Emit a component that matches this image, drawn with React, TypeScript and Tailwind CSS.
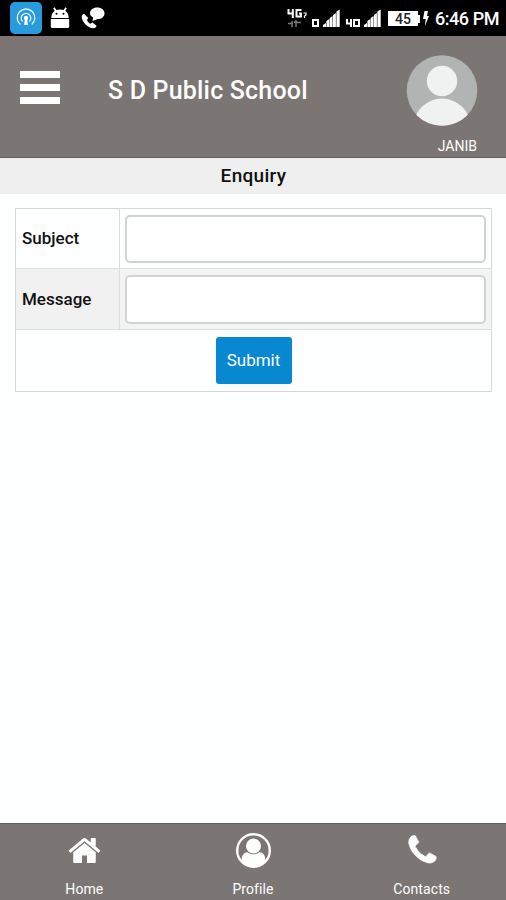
import React from 'react';

type NavItemProps = {
  label: string;
  children: React.ReactNode;
};

function SignalBars() {
  return (
    <svg className="h-[18px] w-[17px]" viewBox="0 0 17 18" fill="white">
      <path d="M0 18v-2l3-2v4zM3.400 18v-6l2.900-2v8zM6.700 18V9l2.900-2v11zM10 18V6l2.900-2v14zM13.400 18V2.500L16.700.5V18z" />
    </svg>
  );
}

function StatusBar() {
  return (
    <div className="flex h-9 w-full items-start bg-black text-white">
      <svg className="ml-[10px] mt-[2px] h-8 w-8" viewBox="0 0 32 32" fill="none">
        <rect width="32" height="32" rx="5" fill="#279bdc" />
        <circle cx="16" cy="16" r="2.200" fill="white" />
        <path d="M12.600 19.500a4.800 4.800 0 1 1 6.800 0M10.300 22.500a8.800 8.800 0 1 1 11.400 0" stroke="#e5f4fd" strokeWidth="1.300" />
        <path d="M14.800 18h2.400l.8 5h-4z" fill="white" />
      </svg>
      <svg className="ml-[8px] mt-[7px] h-[21px] w-5" viewBox="0 0 20 21" fill="white">
        <path d="M1.300 10.900C1.300 7.500 2.600 5.300 4.600 4L3.200 1.200l1.600-.9L6.300 3q3.700-1.200 7.400 0L15.200.3l1.600.9L15.400 4c2 1.300 3.300 3.500 3.300 6.900z" />
        <path d="M.8 11.900h18.400v7.600q0 1.500-1.500 1.500H2.300Q.8 21 .8 19.500z" />
        <circle cx="6.500" cy="6.800" r="1" fill="black" />
        <circle cx="13.500" cy="6.800" r="1" fill="black" />
      </svg>
      <svg className="ml-[11px] mt-[7px] h-[22px] w-6" viewBox="0 0 24 22" fill="white">
        <path d="M3 6.800C.9 7.600.3 9.500 1 11.800 2.500 16.500 7.500 21 11.800 21.300c2 .1 3.600-.8 3.700-2.500l-4-3.300-2.200 1.300C7.900 15.900 6.700 14.500 5.900 12.900l1.400-2z" />
        <path d="M16.200.5c4.100 0 7.300 2.300 7.300 5.800s-3 5.800-6.700 5.800L11.500 14l.6-3.500C10 9.500 9 8 9 6.300 9 2.800 12.200.5 16.200.5z" />
      </svg>

      <div className="ml-[182px] mt-[9px] flex h-[18px] w-5 flex-col">
        <svg className="h-[9px] w-5" viewBox="0 0 20 9" fill="none" stroke="white" strokeWidth="2">
          <path d="M1.500 0v4.500h5M5.800 0v9M14.500 1H9.500v6.500h4.500V4.500H12" />
          <path d="M16.500 4h2.500v2l-1.500 1v2" strokeWidth="1.200" />
        </svg>
        <svg className="mt-[2px] h-[7px] w-[15px]" viewBox="0 0 15 7" fill="none" stroke="#777" strokeWidth="1.500">
          <path d="M1 3.500h5M5 1v6M9 7V1M7 3l2-2 2 2M10 2.500h4" />
        </svg>
      </div>
      <svg className="ml-[5px] mt-[19px] h-2 w-[7px]" viewBox="0 0 7 8" fill="none" stroke="white" strokeWidth="2">
        <rect x="1" y="1" width="5" height="6" />
      </svg>
      <div className="ml-[4px] mt-[9px]"><SignalBars /></div>
      <svg className="ml-[6px] mt-[19px] h-2 w-[14px]" viewBox="0 0 14 8" fill="none" stroke="white" strokeWidth="2">
        <path d="M1 0v4.500h5M5 0v8" />
        <rect x="8" y="1" width="5" height="6" />
      </svg>
      <div className="ml-[4px] mt-[9px]"><SignalBars /></div>
      <div className="ml-[7px] mt-[11px] flex items-center">
        <div className="h-[15px] w-[30px] bg-white text-center font-['Roboto'] text-[14px] font-medium leading-[16px] text-[#222]">45</div>
        <div className="h-2 w-[2px] bg-white" />
      </div>
      <svg className="ml-[3px] mt-[11px] h-[15px] w-[6px]" viewBox="0 0 6 15" fill="white">
        <path d="M1.500 0H5L4 5h2L2 15l.6-7H0z" />
      </svg>
      <div className="ml-[6px] mt-[8px] whitespace-nowrap font-['Roboto'] text-[18px] font-medium leading-[21px] tracking-[-0.450px]">
        6:46 PM
      </div>
    </div>
  );
}

function Header() {
  return (
    <header className="flex h-[122px] items-start border-b border-[#65615e] bg-[#7b7673] text-white">
      <button aria-label="Menu" className="ml-5 mt-[35px] flex w-10 flex-col gap-[6px]">
        <span className="h-[7px] w-full bg-white" />
        <span className="h-[7px] w-full bg-white" />
        <span className="h-[7px] w-full bg-white" />
      </button>
      <h1 className="ml-[48px] mt-[39px] whitespace-nowrap text-[25px] font-medium leading-[31px] tracking-[0.180px]">S D Public School</h1>
      <div className="ml-auto mr-[28px] mt-[18px] flex flex-col items-end">
        <svg className="h-[72px] w-[72px]" viewBox="0 0 72 72">
          <clipPath id="avatar">
            <circle cx="36" cy="36.500" r="35.300" />
          </clipPath>
          <g clipPath="url(#avatar)">
            <rect width="72" height="72" fill="#b0b4b3" />
            <circle cx="36" cy="27" r="15.200" fill="#f0f2f1" />
            <circle cx="36" cy="73" r="28.500" fill="#f0f2f1" />
          </g>
        </svg>
        <span className="mr-px mt-[11px] text-[14px] leading-[18px]">JANIB</span>
      </div>
    </header>
  );
}

function NavItem({ label, children }: NavItemProps) {
  return (
    <a className="flex flex-1 flex-col items-center pt-[9px]">
      {children}
      <span className="mt-[12px] text-[14px] leading-[18px] tracking-[0.100px]">{label}</span>
    </a>
  );
}

export default function App() {
  return (
    <div className="flex h-[900px] w-full flex-col overflow-hidden bg-[#fdfefe] font-['Roboto',sans-serif]">
      <StatusBar />
      <Header />

      <h2 className="h-9 bg-[#efefef] pl-px text-center text-[19px] font-medium leading-[35px] tracking-[0.300px] text-[#111]">Enquiry</h2>

      <main className="ml-[15px] mr-[14px] mt-[14px] grid grid-cols-[104px_1fr] border border-[#d6d8d8] text-[17px] font-medium text-[#111]">
        <label className="flex h-[60px] items-center border-b border-r border-[#dcdede] pl-[6px] pt-px">Subject</label>
        <div className="border-b border-[#dcdede] px-[5px] pt-[6px]">
          <input className="block h-12 w-full rounded-[5px] border-2 border-[#d2d3d3] bg-white px-2" />
        </div>
        <label className="flex h-[61px] items-center border-b border-r border-[#dcdede] bg-[#f1f1f1] pl-[6px] pt-[2px]">Message</label>
        <div className="border-b border-[#dcdede] bg-[#f2f3f3] px-[5px] pt-[6px]">
          <input className="block h-[49px] w-full rounded-[5px] border-2 border-[#d2d3d3] bg-white px-2" />
        </div>
        <div className="col-span-2 flex h-[61px] justify-center pt-[7px]">
          <button className="h-[47px] w-[76px] rounded-[3px] bg-[#0788d0] text-[17px] font-normal text-white">Submit</button>
        </div>
      </main>

      <nav className="mt-auto flex h-[77px] border-t border-[#65615e] bg-[#7b7673] text-white">
        <NavItem label="Home">
          <svg className="h-[35px] w-[33px]" viewBox="0 0 1664 1792" fill="currentColor">
            <path d="M1408 992v480q0 26-19 45t-45 19h-384v-384h-256v384h-384q-26 0-45-19t-19-45v-480q0-1 .5-3t.5-3l575-474 575 474q1 2 1 6zm223-69l-62 74q-8 9-21 11h-3q-13 0-21-7l-692-577-692 577q-12 8-24 7-13-2-21-11l-62-74q-8-10-7-23.5t11-21.5l719-599q32-26 76-26t76 26l244 204v-195q0-14 9-23t23-9h192q14 0 23 9t9 23v408l219 182q10 8 11 21.5t-7 23.5z" />
          </svg>
        </NavItem>
        <NavItem label="Profile">
          <svg className="h-[35px] w-[35px]" viewBox="0 0 35 35" fill="currentColor">
            <circle cx="17.500" cy="17.500" r="16.300" fill="none" stroke="currentColor" strokeWidth="2.400" />
            <circle cx="17.500" cy="13" r="7.500" />
            <path d="M5.500 27c.4-5 2.500-7.800 6-7.800 3.500 2.700 8.500 2.700 12 0 3.500 0 5.600 2.800 6 7.800-2.500 4-7 6.500-12 6.500S8 31 5.500 27z" />
          </svg>
        </NavItem>
        <NavItem label="Contacts">
          <svg className="ml-px h-[35px] w-[35px]" viewBox="0 0 1792 1792" fill="currentColor">
            <path d="M1600 1240q0 27-10 70.5t-21 68.5q-21 50-122 106-94 51-186 51-27 0-53-3.500t-57-12.500-47-14.500-55.500-20.500-49.500-18q-98-35-175-83-127-79-264-216t-216-264q-48-77-83-175-3-9-18-49.500t-20.500-55.500-14.500-47-12.500-57-3.500-53q0-92 51-186 56-101 106-122 25-11 68.500-21t70.500-10q14 0 21 3 18 6 53 76 11 19 30 54t35 63.500 31 53.500q3 4 17.500 25t21.500 35.500 7 28.500q0 20-28.500 50t-62 55-62 53-28.500 46q0 9 5 22.500t8.500 20.500 14 24 11.500 19q76 137 174 235t235 174q2 1 19 11.500t24 14 20.500 8.500 22.500 5q18 0 46-28.500t53-62 55-62 50-28.500q14 0 28.500 7t35.500 21.500 25 17.500q25 15 53.500 31t63.500 35 54 30q70 35 76 53 3 7 3 21z" stroke="currentColor" strokeWidth="40" />
          </svg>
        </NavItem>
      </nav>
    </div>
  );
}
